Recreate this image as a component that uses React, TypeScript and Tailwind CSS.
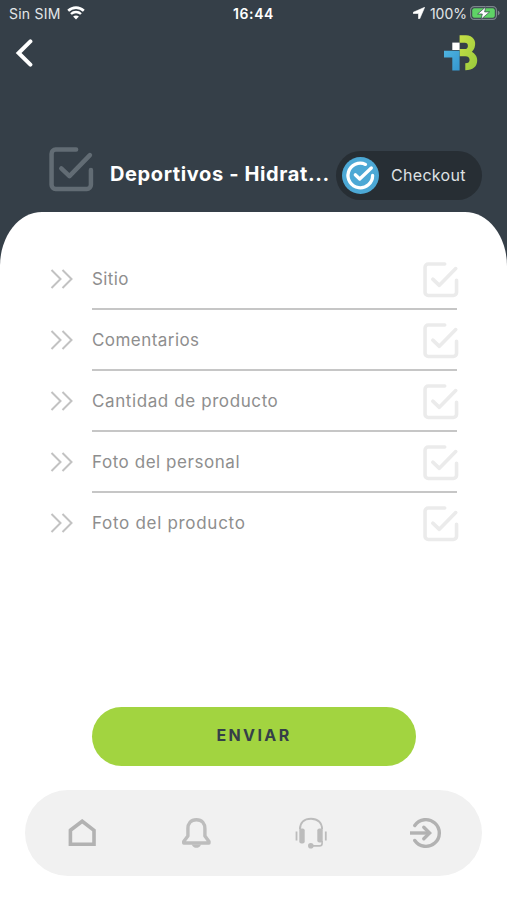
// src/App.tsx
import type { ReactNode } from "react";

type Field = {
  id: number;
  label: string;
  spacing: string;
};

const fields: Field[] = [
  { id: 1, label: "Sitio", spacing: "tracking-[0.4px]" },
  { id: 2, label: "Comentarios", spacing: "tracking-[0.45px]" },
  { id: 3, label: "Cantidad de producto", spacing: "tracking-[0.6px]" },
  { id: 4, label: "Foto del personal", spacing: "tracking-[0.55px]" },
  { id: 5, label: "Foto del producto", spacing: "tracking-[0.7px]" },
];

function CheckBoxIcon({ className }: { className: string }) {
  return (
    <svg
      viewBox="0 0 44 44"
      className={className}
      fill="none"
      stroke="currentColor"
      strokeWidth="4.4"
      strokeLinecap="round"
      strokeLinejoin="round"
    >
      <path d="M26.5 2.5H6.5A4 4 0 0 0 2.5 6.5V37A4 4 0 0 0 6.5 41H37A4 4 0 0 0 41 37V22.5" />
      <path d="M12 21L20 28.5L40 8" />
    </svg>
  );
}

function ChevronsIcon() {
  return (
    <svg
      viewBox="0 0 24 20"
      className="h-5 w-6"
      fill="none"
      stroke="#c2c2c2"
      strokeWidth="2"
    >
      <path d="M1.5 1L10.5 10L1.5 19M12.5 1L21.5 10L12.5 19" />
    </svg>
  );
}

function StatusBar() {
  return (
    <div className="relative flex h-7 items-center justify-between pr-[7px] pb-[2px] pl-[9px] text-[#e3e7ea]">
      <div className="flex items-center gap-[6px]">
        <span className="text-[14px] tracking-[0.25px]">Sin SIM</span>
        <svg viewBox="0 0 18 14" className="h-[14px] w-[18px]" fill="none" stroke="#fff">
          <path d="M1.2 4.8C5.6 .6 12.4 .6 16.8 4.8" strokeWidth="2.6" />
          <path d="M4 8C6.8 5.3 11.2 5.3 14 8" strokeWidth="2.4" />
          <path d="M9 13.5L6.1 10.6C7.7 9.1 10.3 9.1 11.9 10.6Z" fill="#fff" stroke="none" />
        </svg>
      </div>
      <span className="absolute inset-x-0 text-center text-[14px] font-semibold tracking-[0.6px] text-white">
        16:44
      </span>
      <div className="flex items-center">
        <svg viewBox="0 0 12 12" className="mr-[5px] h-3 w-3" fill="#fff">
          <path d="M11.7 .3L.2 5.3V6.5H5.5V11.8H6.7Z" stroke="#fff" strokeWidth=".6" />
        </svg>
        <span className="mr-[3px] text-[14px]">100%</span>
        <svg viewBox="0 0 30 14" className="h-[14px] w-[30px]">
          <rect x=".6" y=".6" width="25.8" height="12.8" rx="3.6" fill="none" stroke="#7c858b" strokeWidth="1.2" />
          <path d="M27.8 4.6V9.4C30.2 8.5 30.2 5.5 27.8 4.6Z" fill="#7c858b" />
          <rect x="2.2" y="2.2" width="22.6" height="9.6" rx="2" fill="#5fd366" />
          <path d="M15.8 .8L7.6 8H12.3L11 13.4L19.6 5.9H14.6Z" fill="#fff" stroke="#35414a" strokeWidth=".7" />
        </svg>
      </div>
    </div>
  );
}

function Logo() {
  return (
    <svg viewBox="0 0 34 36" className="h-9 w-[34px]">
      <defs>
        <linearGradient id="logoGreen" x1="0" y1="0" x2="1" y2="1">
          <stop offset="0" stopColor="#c7df46" />
          <stop offset="1" stopColor="#98cb3c" />
        </linearGradient>
        <linearGradient id="logoBlue" x1="0" y1="0" x2="1" y2="1">
          <stop offset="0" stopColor="#4fb4e0" />
          <stop offset="1" stopColor="#3496cf" />
        </linearGradient>
      </defs>
      <path
        d="M15.6 .3H22C29 .3 32.8 6 30.6 12.5C30 14.4 28.8 15.8 27.8 16.8C30.8 18.6 33.2 21.2 33.2 25.4C33.2 31.3 29 35.2 21.3 35.2V28.2C24.3 28.2 25.6 26.9 25.6 24.9C25.6 22.6 24.2 21.2 21.3 21.2H15.6V14H20.8C22.8 14 23.9 12.9 23.9 10.9C23.9 8.9 22.8 7.8 20.8 7.8H15.6Z"
        fill="url(#logoGreen)"
      />
      <path d="M0 15.7H15.6V35.5H8.3V22.6H0Z" fill="url(#logoBlue)" />
      <path d="M8.3 7.6H15.6V15H8.3Z" fill="#fff" />
    </svg>
  );
}

function Header() {
  return (
    <header className="h-[270px] bg-[#353f48]">
      <StatusBar />
      <div className="flex h-[49px] items-center justify-between pr-[29px] pl-[15px]">
        <button type="button" aria-label="Volver">
          <svg viewBox="0 0 18 28" className="h-7 w-[18px]" fill="none" stroke="#fff" strokeWidth="4">
            <path d="M15.4 2.4L3.6 14L15.4 25.6" strokeLinecap="round" />
          </svg>
        </button>
        <Logo />
      </div>
      <div className="mt-[70px] flex h-14 items-center pl-[49px]">
        <CheckBoxIcon className="-mt-[11px] h-[45px] w-[45px] text-[#626c74]" />
        <h1 className="-mt-[2px] ml-4 w-[221px] text-[20px] font-bold tracking-[0.62px] whitespace-nowrap text-white">
          Deportivos - Hidrat...
        </h1>
        <button
          type="button"
          className="ml-[5px] flex h-[49px] w-[146px] items-center rounded-full bg-[#272e34] pl-[6px]"
        >
          <svg viewBox="0 0 37 37" className="h-[37px] w-[37px]" fill="none" stroke="#fff" strokeLinecap="round">
            <circle cx="18.5" cy="18.5" r="18.5" fill="#4ca8d5" stroke="none" />
            <path d="M23.5 7.4A12.3 12.3 0 1 0 30.6 18.5" strokeWidth="3.3" />
            <path d="M13.3 17.8L17.7 22L29.3 11" strokeWidth="3.3" strokeLinejoin="round" />
          </svg>
          <span className="-mt-px ml-3 text-[16px] tracking-[0.3px] text-[#dfe2e4]">Checkout</span>
        </button>
      </div>
    </header>
  );
}

function FieldRow({ field, last }: { field: Field; last: boolean }) {
  return (
    <li className="flex h-[61px]">
      <div className="flex w-[42px] items-center pb-px">
        <ChevronsIcon />
      </div>
      <div
        className={
          last
            ? "flex flex-1 items-center justify-between pt-px"
            : "flex flex-1 items-center justify-between border-b-2 border-[#c6c6c6] pt-[3px]"
        }
      >
        <span className={`text-[17px] text-[#8e8e8e] ${field.spacing}`}>{field.label}</span>
        <CheckBoxIcon className="-mr-[2px] h-9 w-9 text-[#ebebeb]" />
      </div>
    </li>
  );
}

function TabButton({ label, children }: { label: string; children: ReactNode }) {
  return (
    <button type="button" aria-label={label} className="flex flex-1 items-center justify-center">
      {children}
    </button>
  );
}

function TabBar() {
  return (
    <nav className="mt-6 mr-[25px] ml-[25px] flex h-[86px] rounded-full bg-[#f1f1f1] text-[#b2b2b2]">
      <TabButton label="Inicio">
        <svg viewBox="0 0 28 28" className="h-7 w-7" fill="none" stroke="currentColor" strokeWidth="3.6">
          <path d="M2.4 11.3L14.2 2.2L26 11.3V25.2H2.4Z" />
        </svg>
      </TabButton>
      <TabButton label="Notificaciones">
        <svg viewBox="0 0 30 32" className="h-8 w-[30px]" fill="none" stroke="#bdbdbd" strokeWidth="3.4" strokeLinejoin="round">
          <path d="M15.4 2.7C9.6 2.7 6.9 6.6 6.9 11.6V19L2.7 24.5V26H28V24.5L23.9 19V11.6C23.9 6.6 21.2 2.7 15.4 2.7Z" />
          <path d="M10.8 27.4C12.2 32 18.6 32 20 27.4Z" fill="#bdbdbd" stroke="none" />
        </svg>
      </TabButton>
      <TabButton label="Soporte">
        <svg viewBox="0 0 32 32" className="h-8 w-8" fill="none" stroke="#bcbcbc">
          <path d="M4.9 12.5C4.9 5.5 9.2 1.7 16 1.7S27.1 5.5 27.1 12.5" strokeWidth="1.9" />
          <rect x="4.3" y="11.5" width="5.4" height="15" rx="2" fill="#bcbcbc" stroke="none" />
          <rect x="22.3" y="11.5" width="5.4" height="14" rx="2" fill="#bcbcbc" stroke="none" />
          <path d="M1.5 14.5V23.5M30.8 14.5V23.5" strokeWidth="1.8" />
          <path d="M27.1 24V26.5Q27.1 28.9 24.4 28.9H16" strokeWidth="1.6" />
          <circle cx="15.8" cy="28.8" r="2.8" fill="#bcbcbc" stroke="none" />
        </svg>
      </TabButton>
      <TabButton label="Salir">
        <svg viewBox="0 0 32 32" className="h-8 w-8" fill="none" stroke="currentColor" strokeWidth="3.4" strokeLinecap="round">
          <path d="M5.8 8.5A13.4 13.4 0 1 1 5.8 23.5" />
          <path d="M1 16H19" strokeLinecap="butt" />
          <path d="M14.8 10.2L20.6 16L14.8 21.8" />
        </svg>
      </TabButton>
    </nav>
  );
}

export default function App() {
  return (
    <div className="h-[900px] w-full overflow-hidden bg-white font-['Inter','Noto_Sans',sans-serif]">
      <Header />
      <main className="relative -mt-[58px] flex h-[688px] flex-col rounded-t-[42px_54px] bg-white pt-[37px]">
        <ul className="mr-[50px] ml-[50px]">
          {fields.map((f, i) => (
            <FieldRow key={f.id} field={f} last={i === fields.length - 1} />
          ))}
        </ul>
        <button
          type="button"
          className="mt-[153px] mr-[91px] ml-[92px] h-[59px] rounded-full bg-[#a2d440] pb-[3px] text-[16px] font-bold tracking-[2.4px] text-[#353f48]"
        >
          ENVIAR
        </button>
        <TabBar />
      </main>
    </div>
  );
}
